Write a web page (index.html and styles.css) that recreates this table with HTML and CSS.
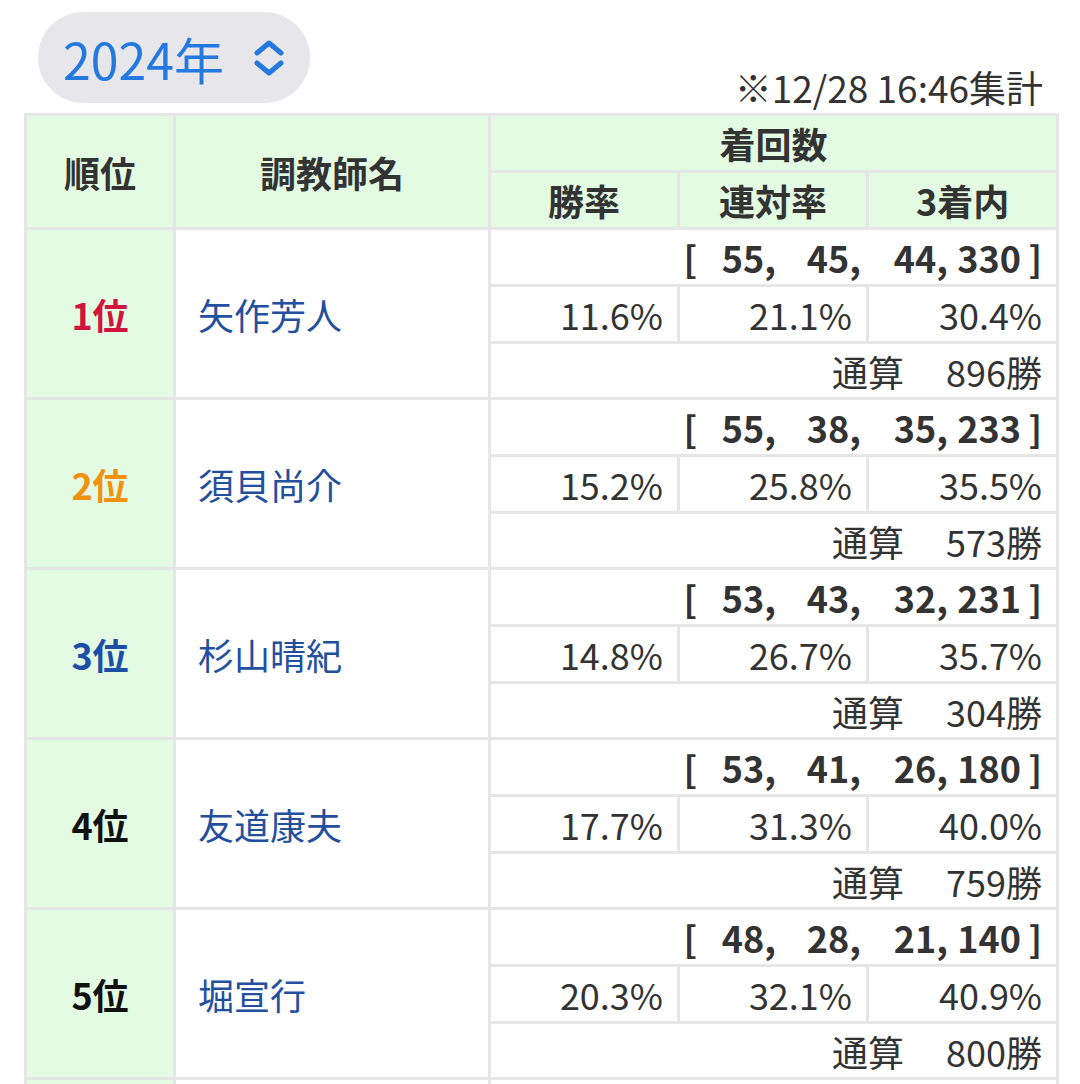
FILE: index.html
```html
<!DOCTYPE html>
<html lang="ja">
<head>
<meta charset="utf-8">
<title>調教師リーディング 2024年</title>
<link rel="stylesheet" href="styles.css">
</head>
<body>
<div class="page">
  <div class="top">
    <div class="year">
      <span class="year-text">2024年</span>
      <svg class="chev" width="34" height="36" viewBox="0 0 34 36" aria-hidden="true">
        <path d="M5 13 L17 3 L29 13" fill="none" stroke="currentColor" stroke-width="5" stroke-linecap="round" stroke-linejoin="round"/>
        <path d="M5 23 L17 33 L29 23" fill="none" stroke="currentColor" stroke-width="5" stroke-linecap="round" stroke-linejoin="round"/>
      </svg>
    </div>
    <div class="stamp">※12/28 16:46集計</div>
  </div>

  <table class="rank">
    <colgroup>
      <col class="c-rank"><col class="c-name"><col class="c-p1"><col class="c-p2"><col class="c-p3">
    </colgroup>
    <thead>
      <tr class="hr">
        <th rowspan="2">順位</th>
        <th rowspan="2">調教師名</th>
        <th colspan="3">着回数</th>
      </tr>
      <tr class="hr">
        <th>勝率</th><th>連対率</th><th>3着内</th>
      </tr>
    </thead>
    <tbody>
      <tr class="sr">
        <td rowspan="3" class="pos p1">1位</td>
        <td rowspan="3" class="name">矢作芳人</td>
        <td colspan="3" class="counts"><div class="cnt"><span class="b-l">[</span><span class="s1">55,</span><span class="s2">45,</span><span class="s3">44,</span><span class="s4">330</span><span class="b-r">]</span></div></td>
      </tr>
      <tr class="sr"><td class="pct">11.6%</td><td class="pct">21.1%</td><td class="pct">30.4%</td></tr>
      <tr class="sr last"><td colspan="3" class="total">通算<span class="wins">896勝</span></td></tr>

      <tr class="sr">
        <td rowspan="3" class="pos p2">2位</td>
        <td rowspan="3" class="name">須貝尚介</td>
        <td colspan="3" class="counts"><div class="cnt"><span class="b-l">[</span><span class="s1">55,</span><span class="s2">38,</span><span class="s3">35,</span><span class="s4">233</span><span class="b-r">]</span></div></td>
      </tr>
      <tr class="sr"><td class="pct">15.2%</td><td class="pct">25.8%</td><td class="pct">35.5%</td></tr>
      <tr class="sr last"><td colspan="3" class="total">通算<span class="wins">573勝</span></td></tr>

      <tr class="sr">
        <td rowspan="3" class="pos p3">3位</td>
        <td rowspan="3" class="name">杉山晴紀</td>
        <td colspan="3" class="counts"><div class="cnt"><span class="b-l">[</span><span class="s1">53,</span><span class="s2">43,</span><span class="s3">32,</span><span class="s4">231</span><span class="b-r">]</span></div></td>
      </tr>
      <tr class="sr"><td class="pct">14.8%</td><td class="pct">26.7%</td><td class="pct">35.7%</td></tr>
      <tr class="sr last"><td colspan="3" class="total">通算<span class="wins">304勝</span></td></tr>

      <tr class="sr">
        <td rowspan="3" class="pos">4位</td>
        <td rowspan="3" class="name">友道康夫</td>
        <td colspan="3" class="counts"><div class="cnt"><span class="b-l">[</span><span class="s1">53,</span><span class="s2">41,</span><span class="s3">26,</span><span class="s4">180</span><span class="b-r">]</span></div></td>
      </tr>
      <tr class="sr"><td class="pct">17.7%</td><td class="pct">31.3%</td><td class="pct">40.0%</td></tr>
      <tr class="sr last"><td colspan="3" class="total">通算<span class="wins">759勝</span></td></tr>

      <tr class="sr">
        <td rowspan="3" class="pos">5位</td>
        <td rowspan="3" class="name">堀宣行</td>
        <td colspan="3" class="counts"><div class="cnt"><span class="b-l">[</span><span class="s1">48,</span><span class="s2">28,</span><span class="s3">21,</span><span class="s4">140</span><span class="b-r">]</span></div></td>
      </tr>
      <tr class="sr"><td class="pct">20.3%</td><td class="pct">32.1%</td><td class="pct">40.9%</td></tr>
      <tr class="sr last"><td colspan="3" class="total">通算<span class="wins">800勝</span></td></tr>

      <tr class="sr">
        <td rowspan="3" class="pos"></td>
        <td rowspan="3" class="name"></td>
        <td colspan="3" class="counts"></td>
      </tr>
      <tr class="sr"><td class="pct"></td><td class="pct"></td><td class="pct"></td></tr>
      <tr class="sr last"><td colspan="3" class="total"></td></tr>
    </tbody>
  </table>
</div>
</body>
</html>
```

FILE: styles.css
```css
html, body {
  margin: 0;
  padding: 0;
  background: #ffffff;
}

body {
  font-family: "Noto Sans CJK JP", "Noto Sans", sans-serif;
  color: #333333;
  overflow: hidden;
}

.page {
  padding: 12px 24px 0 24px;
}

.top {
  display: flex;
  justify-content: space-between;
  align-items: flex-end;
  margin-bottom: 10px;
}

.year {
  display: flex;
  align-items: center;
  margin-left: 14px;
  height: 91px;
  padding: 0 24px 0 25px;
  border-radius: 46px;
  background: #e6e6eb;
  color: #2479e0;
}

.year-text {
  font-size: 50px;
  line-height: 1;
}

.chev {
  margin-left: 28px;
  display: block;
}

.stamp {
  font-size: 37px;
  line-height: 40px;
  margin-right: 13px;
  margin-bottom: -4px;
  color: #333333;
}

.rank {
  width: 1032px;
  table-layout: fixed;
  border-collapse: collapse;
  border: 3px solid #e6e6e6;
}

.c-rank { width: 149px; }
.c-name { width: 315px; }
.c-p1 { width: 189px; }
.c-p2 { width: 189px; }
.c-p3 { width: 190px; }

.rank th,
.rank td {
  border: 3px solid #e6e6e6;
  padding: 0 14px;
  font-size: 36px;
  line-height: 1;
  vertical-align: middle;
  white-space: nowrap;
}

.rank th {
  background: #e3fbe3;
  font-weight: 700;
  text-align: center;
  color: #333333;
}

.hr { height: 57px; }
.sr { height: 57px; }
.sr.last { height: 56px; }

.pos {
  background: #e3fbe3;
  text-align: center;
  font-weight: 700;
  color: #111111;
}

.p1 { color: #d0143c; }
.p2 { color: #f0920f; }
.p3 { color: #1c4ea6; }

.name {
  text-align: left;
  color: #23509e;
  padding-left: 22px !important;
}

.counts {
  font-weight: 700;
  color: #333333;
}

.cnt {
  display: flex;
  justify-content: flex-end;
  align-items: baseline;
}

.cnt span { display: inline-block; text-align: right; }
.b-l { text-align: left; }
.s1 { width: 79px; }
.s2 { width: 85px; }
.s3 { width: 87px; }
.s4 { width: 73px; }
.b-r { width: 21px; }

.pct {
  text-align: right;
  color: #333333;
}

.total {
  text-align: right;
  color: #333333;
}

.wins {
  margin-left: 42px;
}
```
